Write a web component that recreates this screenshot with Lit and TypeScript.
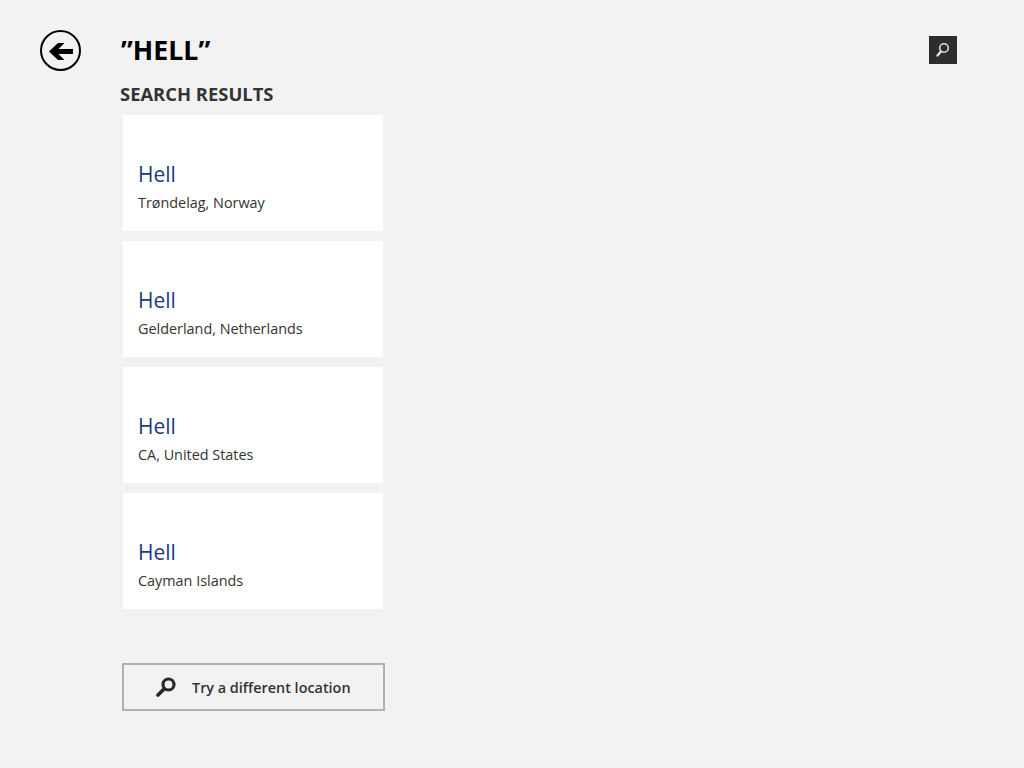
import { LitElement, html, css } from 'lit';
import { customElement, state } from 'lit/decorators.js';

@customElement('app-root')
export class AppRoot extends LitElement {
  @state() results = [
    { name: 'Hell', place: 'Trøndelag, Norway' },
    { name: 'Hell', place: 'Gelderland, Netherlands' },
    { name: 'Hell', place: 'CA, United States' },
    { name: 'Hell', place: 'Cayman Islands' },
  ];

  static styles = css`
    :host {
      display: block;
      width: 1024px;
      height: 768px;
      background: #f2f2f2;
      font-family: 'Open Sans', 'Noto Sans', sans-serif;
      overflow: hidden;
    }

    .page {
      display: grid;
      grid-template-columns: 120px 1fr;
      padding-top: 29px;
    }

    .back {
      margin-left: 40px;
      width: 42px;
      height: 42px;
    }

    .main {
      display: flex;
      flex-direction: column;
    }

    .top {
      display: flex;
      justify-content: space-between;
      align-items: flex-start;
      height: 42px;
      padding-right: 67px;
    }

    h1 {
      margin: 0 0 0 1px;
      font-size: 26.7px;
      line-height: 42px;
      font-weight: 700;
      color: #000;
    }

    .search {
      width: 28px;
      height: 28px;
      margin-top: 7px;
      background: #2d2d2d;
      display: flex;
      align-items: center;
      justify-content: center;
    }

    h2 {
      margin: 10px 0 0;
      font-size: 18.4px;
      line-height: 26px;
      font-weight: 700;
      color: #333;
    }

    .list {
      display: flex;
      flex-direction: column;
      gap: 10px;
      margin: 8px 0 0 3px;
    }

    .card {
      width: 260px;
      height: 116px;
      box-sizing: border-box;
      background: #fff;
      padding: 44px 15px 0;
    }

    .name {
      font-size: 21px;
      line-height: 30px;
      color: #1e3a7a;
    }

    .place {
      font-size: 14.4px;
      line-height: 20px;
      margin-top: 4px;
      color: #333;
    }

    .try {
      display: flex;
      align-items: center;
      gap: 15px;
      box-sizing: border-box;
      width: 263px;
      height: 48px;
      margin: 54px 0 0 2px;
      padding-left: 31px;
      border: 2px solid #b0b0b0;
      font-size: 14.4px;
      font-weight: 600;
      color: #333;
    }
  `;

  render() {
    return html`
      <div class="page">
        <svg class="back" viewBox="0 0 42 42">
          <circle cx="20.5" cy="21.5" r="19.5" fill="none" stroke="#000" stroke-width="2"></circle>
          <path d="M9 22.5 L18 14 H24.5 L18.5 20 H33 V25 H18.5 L24.5 31 H18 Z" fill="#000"></path>
        </svg>
        <div class="main">
          <div class="top">
            <h1>”HELL”</h1>
            <div class="search">
              <svg width="18" height="18" viewBox="0 0 18 18">
                <circle cx="10" cy="7" r="4.3" fill="none" stroke="#e0e0e0" stroke-width="1.6"></circle>
                <path d="M7 10.5 L3.5 14.5" stroke="#e0e0e0" stroke-width="2.4" stroke-linecap="round"></path>
              </svg>
            </div>
          </div>
          <h2>SEARCH RESULTS</h2>
          <div class="list">
            ${this.results.map(
              (r) => html`
                <div class="card">
                  <div class="name">${r.name}</div>
                  <div class="place">${r.place}</div>
                </div>
              `,
            )}
          </div>
          <div class="try">
            <svg width="22" height="22" viewBox="0 0 22 22">
              <circle cx="13.5" cy="8.5" r="5.5" fill="none" stroke="#2a2a2a" stroke-width="3.2"></circle>
              <path d="M9 13 L3 19" stroke="#2a2a2a" stroke-width="3.8" stroke-linecap="round"></path>
            </svg>
            <span>Try a different location</span>
          </div>
        </div>
      </div>
    `;
  }
}
